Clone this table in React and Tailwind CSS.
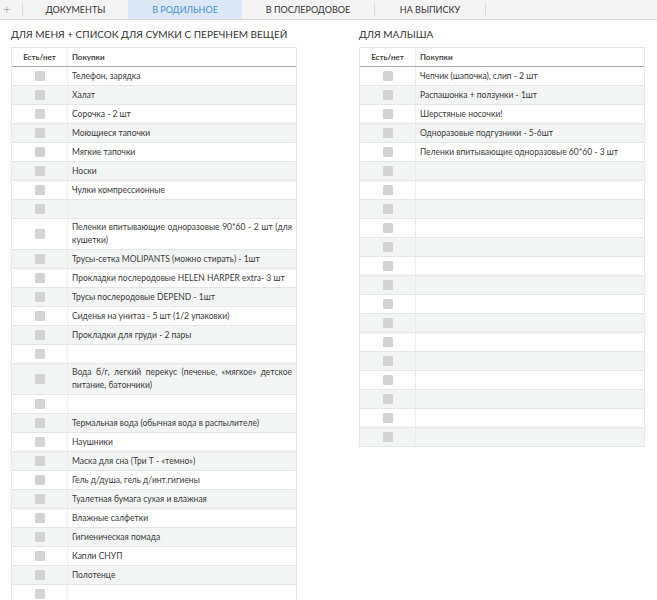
import React from "react";

const left = [
  "Телефон, зарядка",
  "Халат",
  "Сорочка - 2 шт",
  "Моющиеся тапочки",
  "Мягкие тапочки",
  "Носки",
  "Чулки компрессионные",
  "",
  "Пеленки впитывающие одноразовые 90*60 - 2 шт (для кушетки)",
  "Трусы-сетка MOLIPANTS (можно стирать) - 1шт",
  "Прокладки послеродовые HELEN HARPER extra- 3 шт",
  "Трусы послеродовые DEPEND - 1шт",
  "Сиденья на унитаз - 5 шт (1/2 упаковки)",
  "Прокладки для груди - 2 пары",
  "",
  "Вода б/г, легкий перекус (печенье, «мягкое» детское питание, батончики)",
  "",
  "Термальная вода (обычная вода в распылителе)",
  "Наушники",
  "Маска для сна (Три Т - «темно»)",
  "Гель д/душа, гель д/инт.гигиены",
  "Туалетная бумага сухая и влажная",
  "Влажные салфетки",
  "Гигиеническая помада",
  "Капли СНУП",
  "Полотенце",
  "",
  "",
];

const right = [
  "Чепчик (шапочка), слип - 2 шт",
  "Распашонка + ползунки - 1шт",
  "Шерстяные носочки!",
  "Одноразовые подгузники - 5-6шт",
  "Пеленки впитывающие одноразовые 60*60 - 3 шт",
  ...Array(15).fill(""),
];

function Table({ items }) {
  return (
    <div className="w-[286px] border-x border-t border-[#e6e8e8]">
      <div className="flex h-[19px] border-b border-[#a9a9a9] bg-white text-[8px] font-bold text-[#444]">
        <div className="flex w-[56px] shrink-0 items-center justify-center border-r border-[#ececec]">Есть/нет</div>
        <div className="flex items-center pl-[4px]">Покупки</div>
      </div>
      {items.map((t, i) => (
        <div
          key={i}
          className={`flex min-h-[19px] border-b border-[#e3e6e6] ${i % 2 === 1 ? "bg-[#f3f5f5]" : "bg-white"}`}
        >
          <div className="flex w-[56px] shrink-0 items-center justify-center border-r border-[#ececec]">
            <div className="h-[10px] w-[10px] rounded-[1.5px] bg-[#d3d3d3]" />
          </div>
          <div className="flex flex-1 items-center px-[4px] py-[2px] text-justify text-[8.5px] leading-[13px] text-[#3a3a3a]">
            <span className="w-full">{t}</span>
          </div>
        </div>
      ))}
    </div>
  );
}

export default function App() {
  return (
    <div className="h-[600px] w-[657px] overflow-hidden bg-white font-['Lato',sans-serif]">
      <div className="flex h-[20px] items-stretch border-b border-[#d6d6d6] bg-[#f4f4f4] text-[9px] text-[#333]">
        <div className="flex w-[22px] items-center pl-[3px] text-[13px] font-light text-[#888]">+</div>
        <div className="my-[3px] w-px bg-[#dadada]" />
        <div className="flex w-[105px] items-center justify-center">ДОКУМЕНТЫ</div>
        <div className="flex w-[114px] items-center justify-center bg-[#dce8f6] text-[#4b8fd8]">В РОДИЛЬНОЕ</div>
        <div className="flex w-[132px] items-center justify-center">В ПОСЛЕРОДОВОЕ</div>
        <div className="my-[3px] w-px bg-[#dadada]" />
        <div className="flex w-[110px] items-center justify-center">НА ВЫПИСКУ</div>
        <div className="my-[3px] w-px bg-[#dadada]" />
      </div>
      <div className="flex gap-[62px] pl-[11px] pt-[7px]">
        <div className="flex w-[286px] shrink-0 flex-col">
          <div className="mb-[6px] h-[14px] whitespace-nowrap text-[10px] leading-[14px] text-[#333]">
            ДЛЯ МЕНЯ + СПИСОК ДЛЯ СУМКИ С ПЕРЕЧНЕМ ВЕЩЕЙ
          </div>
          <Table items={left} />
        </div>
        <div className="flex w-[286px] shrink-0 flex-col">
          <div className="mb-[6px] h-[14px] whitespace-nowrap text-[10px] leading-[14px] text-[#333]">ДЛЯ МАЛЫША</div>
          <Table items={right} />
        </div>
      </div>
    </div>
  );
}
